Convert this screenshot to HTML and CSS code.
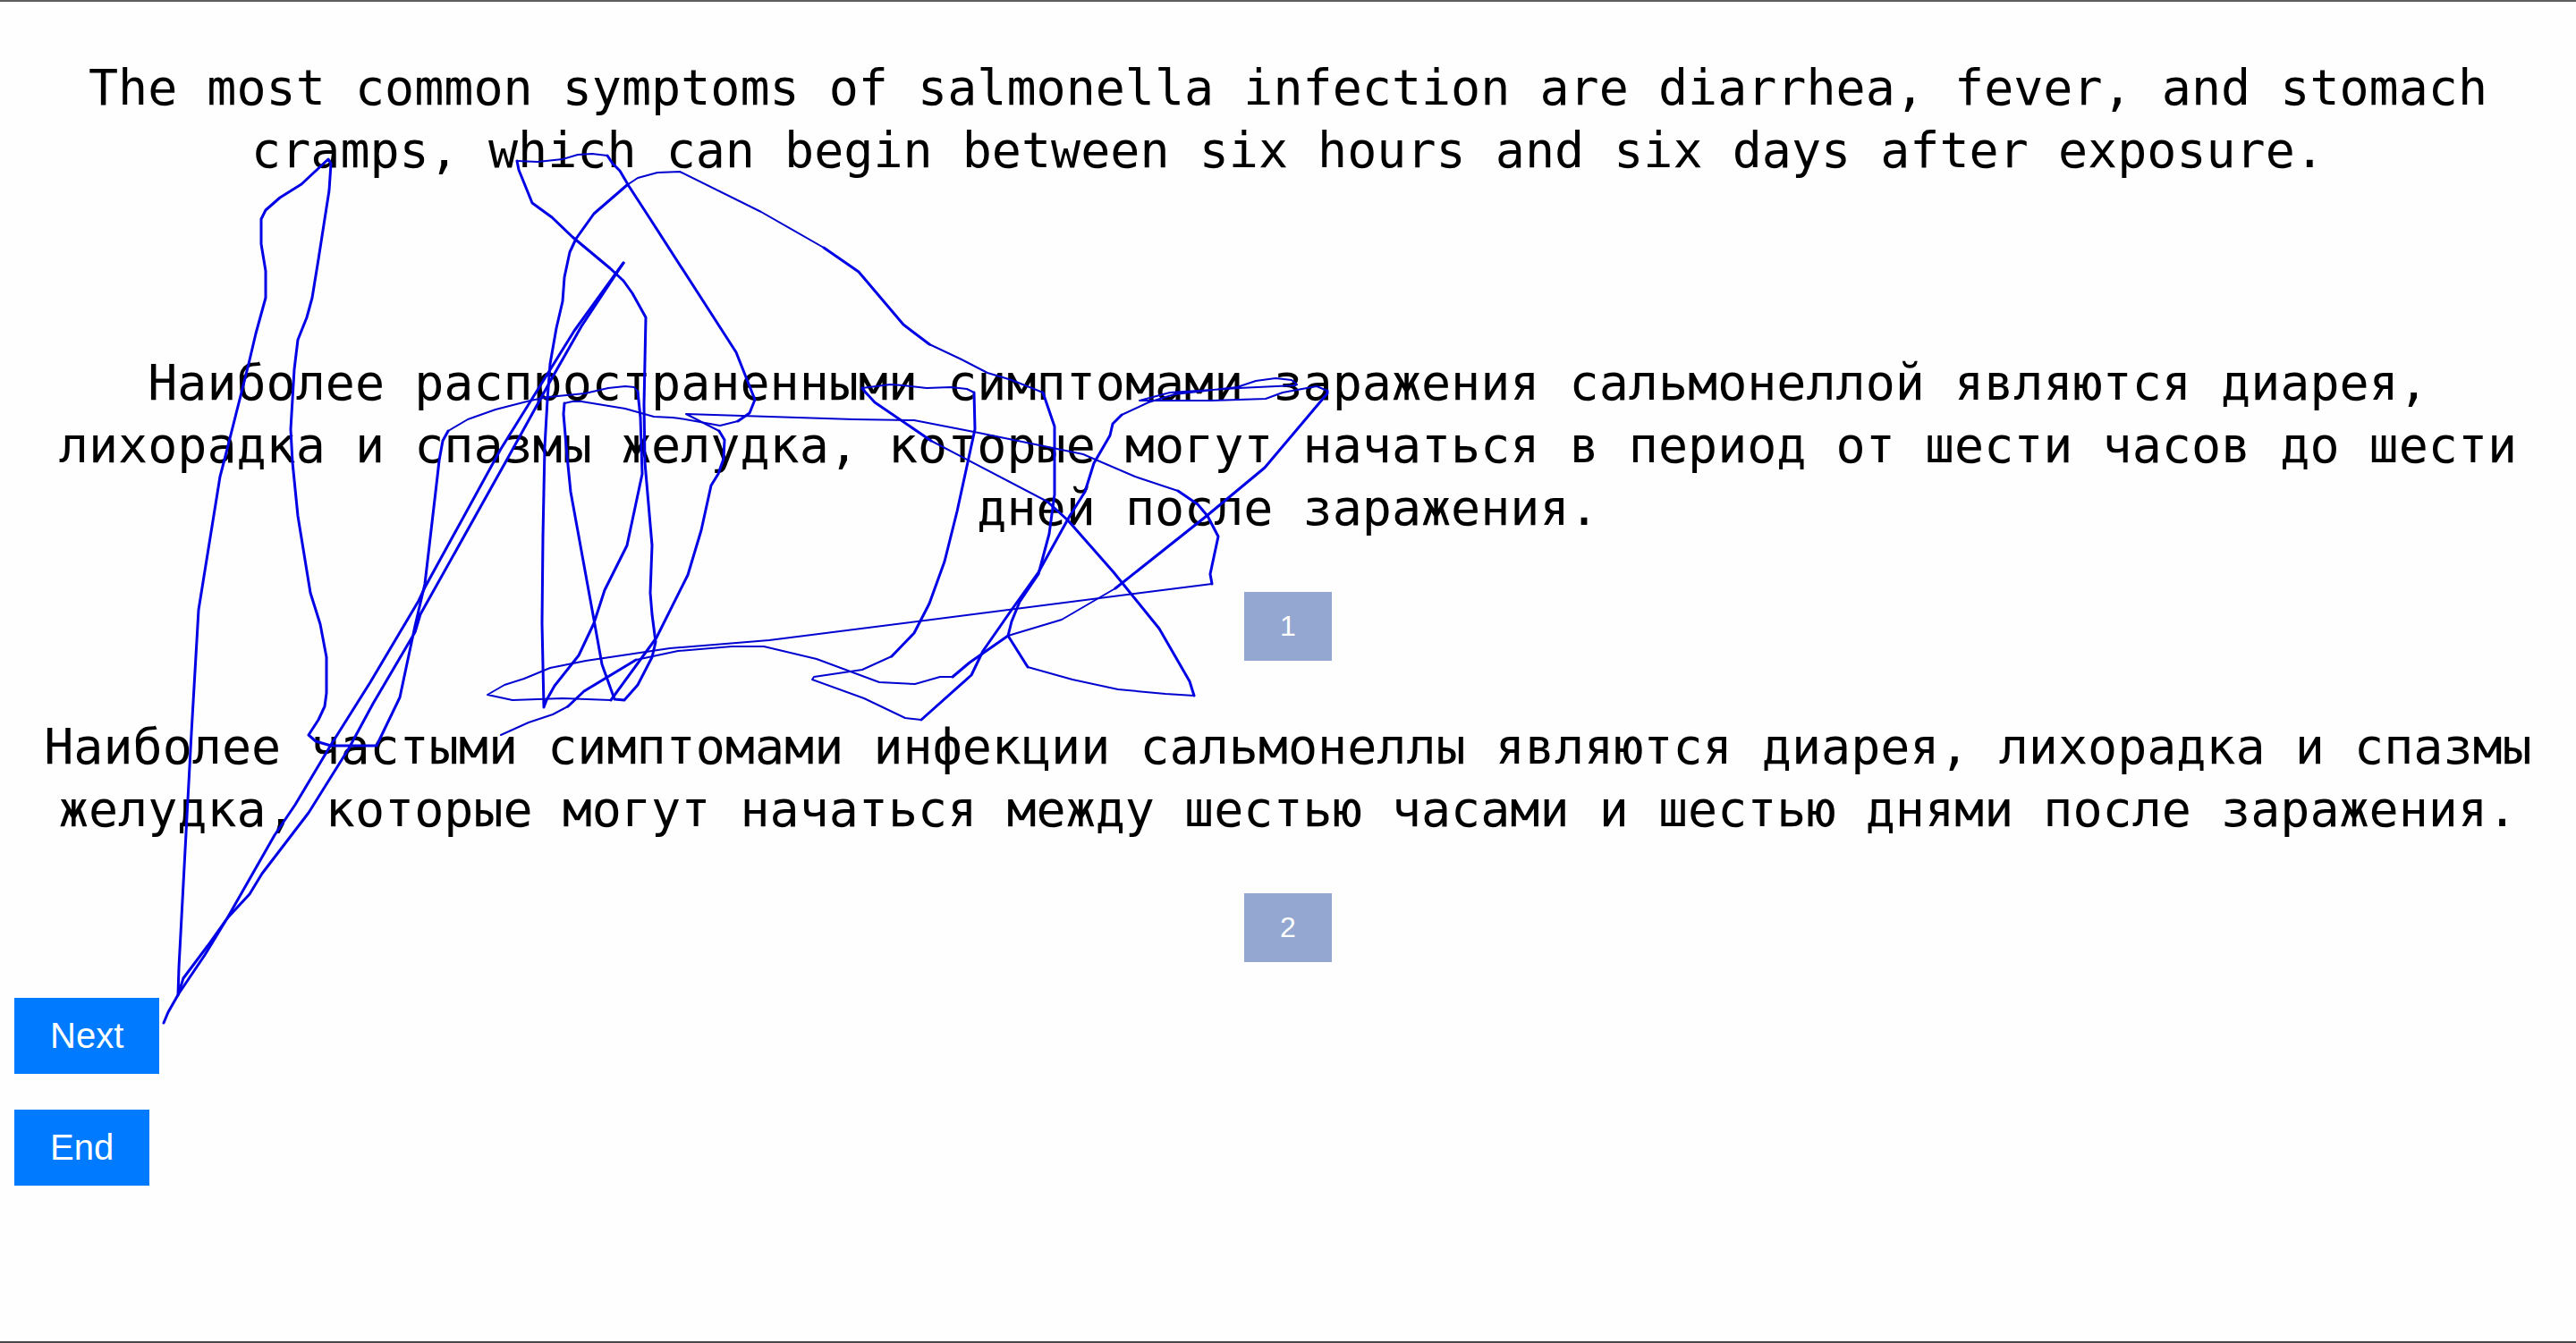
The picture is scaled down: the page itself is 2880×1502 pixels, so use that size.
FILE: index.html
```html
<!DOCTYPE html>
<html lang="ru">
<head>
<meta charset="utf-8">
<meta name="viewport" content="width=device-width, initial-scale=1">
<title>Translation comparison</title>
<link rel="stylesheet" href="styles.css">
</head>
<body>
<main class="page">
  <p class="sentence source" lang="en">The most common symptoms of salmonella infection are diarrhea, fever, and stomach cramps, which can begin between six hours and six days after exposure.</p>
  <section class="option">
    <p class="sentence" id="option-1">Наиболее распространенными симптомами заражения сальмонеллой являются диарея, лихорадка и спазмы желудка, которые могут начаться в период от шести часов до шести дней после заражения.</p>
    <button class="choice" type="button" aria-describedby="option-1">1</button>
  </section>
  <section class="option">
    <p class="sentence" id="option-2">Наиболее частыми симптомами инфекции сальмонеллы являются диарея, лихорадка и спазмы желудка, которые могут начаться между шестью часами и шестью днями после заражения.</p>
    <button class="choice" type="button" aria-describedby="option-2">2</button>
  </section>
  <nav class="actions">
    <button class="action" type="button">Next</button>
    <button class="action" type="button">End</button>
  </nav>
  <svg class="trace" aria-hidden="true">
    <polyline points="697,294 642,370 611,420 560,502 475,657 468,672 414,763 370,833 330,900 307,934 254,1027 229,1068 200,1111 188,1132 183,1144"/>
    <polyline points="697,294 650,365 617,423 569,510 470,687 464,707 417,787 390,837 345,909 293,977 279,1000 254,1027 232,1058 205,1094 199,1113 200,1082 209,913 214,820 222,682 246,533 252,510 278,407 286,373 297,333 297,303 292,273 292,245 297,235 313,221 337,206 367,178 370,183 368,213 356,290 349,333 343,355 333,380 329,413 325,480 327,517 333,577 347,663 358,698 365,735 365,775 363,790 356,805 345,822 353,829 370,834 421,834 447,780 464,700 475,653 489,533 491,515 495,493 501,482"/>
    <polyline class="light" points="501,482 523,469 554,458 593,448 613,444 654,440 680,434 699,432 709,433 713,438"/>
    <polyline points="713,438 716,467 718,530 701,610 676,660 664,697 647,733 620,767 611,783 608,791 606,697 607,600 609,500 612,447 615,407 622,367 629,337 631,310 637,282 644,267 664,239 701,207"/>
    <polyline class="light" points="701,207 713,199 735,193 760,192 851,237 921,277"/>
    <polyline points="921,277 960,304 1010,363 1039,385"/>
    <polyline class="light" points="1039,385 1075,402 1104,417 1131,425 1166,439"/>
    <polyline points="1166,439 1179,477 1179,553 1173,597 1161,642 1140,673 1131,695 1127,711 1149,746"/>
    <polyline class="light" points="1149,746 1199,760 1250,771 1303,776 1335,778"/>
    <polyline points="1335,778 1330,762 1296,703 1245,640 1194,582 1171,561"/>
    <polyline class="light" points="1171,561 1041,493"/>
    <polyline points="1041,493 978,450 967,438 964,434"/>
    <polyline class="light" points="964,434 995,430 1010,431 1036,434 1063,433 1081,435 1089,439"/>
    <polyline points="1089,439 1090,480 1070,572 1056,628 1039,675 1022,708 997,734"/>
    <polyline class="light" points="997,734 964,749 910,757 908,760 966,781 1012,803 1030,805"/>
    <polyline points="1030,805 1086,755 1099,728 1131,682 1161,640 1196,577 1213,550 1223,518 1241,487 1244,474 1254,464"/>
    <polyline class="light" points="1254,464 1284,450 1313,441 1383,433 1404,426 1426,423 1444,425 1450,430 1448,431 1385,434 1308,439 1274,448 1354,448 1415,446 1434,439 1472,432 1484,437"/>
    <polyline points="1484,437 1484,440 1414,523 1349,577 1247,658"/>
    <polyline class="light" points="1247,658 1187,693 1127,711"/>
    <polyline points="1127,711 1084,741 1065,757"/>
    <polyline class="light" points="1065,757 1051,757 1023,765 983,763 913,737 854,723 818,723 758,728 711,738"/>
    <polyline points="711,738 653,773 635,790"/>
    <polyline class="light" points="635,790 618,799 591,808 560,822"/>
    <polyline points="631,451 630,463 634,510 638,550 664,693 673,743 687,782 698,783 713,766 729,735 733,718 729,687 727,663 729,610 721,517 720,453 722,355 707,328 697,314 682,300 640,265 617,243 595,227 580,190 578,180"/>
    <polyline class="light" points="578,180 601,181 629,178 646,173 662,172 679,174"/>
    <polyline points="679,174 685,183 693,191 703,208 727,245 814,380 823,394 844,447 838,462 825,471"/>
    <polyline class="light" points="825,471 805,476 760,468 752,467 731,466 699,457 650,449 640,449 631,451"/>
    <polyline points="683,783 734,713 769,643 784,593 795,543 803,530 809,513 810,492 804,482"/>
    <polyline class="light" points="804,482 767,463 954,469 1022,470 1094,484 1177,501 1211,508 1269,533 1317,549"/>
    <polyline points="1317,549 1339,564 1350,577 1362,600 1353,642 1355,653"/>
    <polyline class="light" points="1355,653 860,716 749,725 655,739 615,747 586,759 564,766 545,777 573,783 629,781 683,783"/>
  </svg>
</main>
</body>
</html>
```
FILE: styles.css
```css
* {
  box-sizing: border-box;
}

body {
  margin: 0;
  background: #fefefe;
  color: #000;
}

.page {
  position: relative;
  display: flex;
  flex-direction: column;
  min-height: 100vh;
  padding: 61px 16px;
  border-top: 2px solid #605e60;
  border-bottom: 2px solid #48484a;
}

.sentence {
  margin: 0;
  font-family: "DejaVu Sans Mono", monospace;
  font-size: 55px;
  line-height: 70px;
  text-align: center;
}

.source {
  margin-bottom: 190px;
}

.option {
  display: flex;
  flex-direction: column;
  align-items: center;
  gap: 59px;
}

.option + .option {
  margin-top: 61px;
}

button {
  border: 0;
  border-radius: 0;
  padding: 20px 40px;
  font-family: "Liberation Sans", Arial, sans-serif;
  color: #fff;
  cursor: pointer;
}

.choice {
  background: #93a7d0;
  font-size: 32px;
  line-height: 37px;
}

.actions {
  display: flex;
  flex-direction: column;
  align-items: flex-start;
  gap: 40px;
  margin-top: 40px;
}

.action {
  background: #007bff;
  font-size: 40px;
  line-height: 45px;
}

/* Pointer trail drawn over the page */
.trace {
  position: absolute;
  top: -2px;
  left: 0;
  width: 100%;
  height: 100%;
  overflow: visible;
  pointer-events: none;
  fill: none;
  stroke: #0000e6;
  stroke-width: 3px;
  stroke-linejoin: round;
  stroke-linecap: round;
}

.light {
  stroke: #0000d0;
  stroke-width: 2px;
}
```
